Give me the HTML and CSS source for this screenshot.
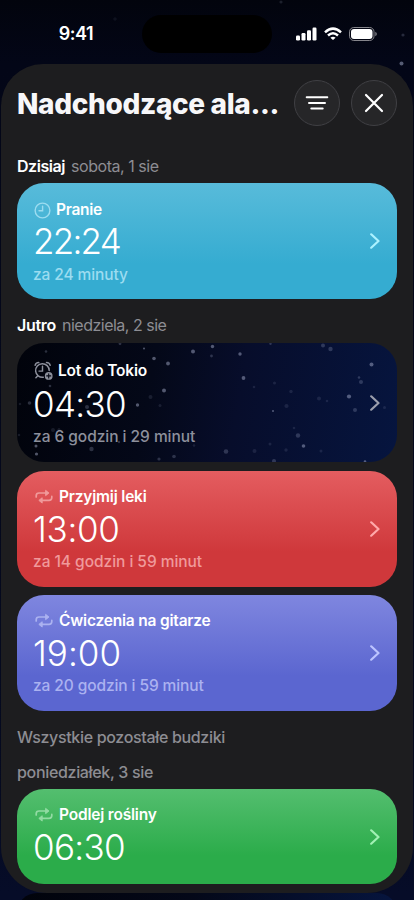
FILE: index.html
```html
<!DOCTYPE html>
<html lang="pl">
<head>
<meta charset="utf-8">
<meta name="viewport" content="width=device-width">
<title>Nadchodzące alarmy</title>
<link rel="stylesheet" href="styles.css">
</head>
<body>
<svg class="symbols" aria-hidden="true">
  <symbol id="repeat" viewBox="0 0 18 16">
    <path d="M1.200 8V6.800Q1.200 4 4 4h8M16.800 7.400v1.200q0 2.800-2.800 2.800H6" fill="none" stroke="currentColor" stroke-width="1.700" stroke-linecap="round"/>
    <path d="M10.600 1.300v5.400L14 4zM7.200 8.700v5.400L3.800 11.400z" fill="currentColor" stroke="currentColor" stroke-width=".9" stroke-linejoin="round"/>
  </symbol>
  <symbol id="chevron" viewBox="0 0 10 16">
    <path d="M1.200 1.300 8.500 8l-7.300 6.700" fill="none" stroke="currentColor" stroke-width="2.200" stroke-linecap="round" stroke-linejoin="round"/>
  </symbol>
</svg>
<div class="screen">
  <svg class="sky" viewBox="0 0 414 900" fill="#aab2d0">
    <circle cx="401.500" cy="63.500" r="2" opacity=".5"/><circle cx="403" cy="35" r="1.600" opacity=".22"/><circle cx="281" cy="2" r="1.600" opacity=".16"/><circle cx="115" cy="19" r="1.800" opacity=".08"/>
  </svg>
  <header class="status">
    <span class="clock">9:41</span>
    <div class="island"></div>
    <div class="indicators">
      <svg width="21" height="14" viewBox="0 0 21 14" fill="#fff"><rect x="0" y="8.500" width="4" height="5" rx="1.200"/><rect x="5.500" y="6" width="4" height="7.500" rx="1.200"/><rect x="11" y="3.300" width="4" height="10.200" rx="1.200"/><rect x="16.500" y=".5" width="4" height="13" rx="1.200"/></svg>
      <svg width="18" height="14" viewBox="0 0 18 14" fill="none" stroke="#fff" stroke-width="2.500"><path d="M1 5.300q8-7.300 16 0M4 8.500q5-4.500 10 0"/><path d="M9 13 6.400 10.700q2.600-2.100 5.200 0z" fill="#fff" stroke="none"/></svg>
      <svg width="28" height="14" viewBox="0 0 28 14"><rect x=".5" y=".5" width="24.500" height="13" rx="4.300" fill="none" stroke="#85858b"/><rect x="2" y="2" width="21.500" height="10" rx="3" fill="#fff"/><path d="M26.300 4.700q1.500.7 1.500 2.300t-1.500 2.300z" fill="#85858b"/></svg>
    </div>
  </header>
  <main class="sheet">
    <div class="toolbar">
      <h1>Nadchodzące ala...</h1>
      <button class="round" aria-label="Filtruj"><svg width="24" height="24" viewBox="0 0 24 24"><path d="M1.700 6.200h20.600M4 12h16M6.300 17.600h11.400" fill="none" stroke="#fff" stroke-width="2" stroke-linecap="round"/></svg></button>
      <button class="round" aria-label="Zamknij"><svg width="24" height="24" viewBox="0 0 24 24"><path d="m4 4 16 16M20 4 4 20" fill="none" stroke="#fff" stroke-width="2.200" stroke-linecap="round"/></svg></button>
    </div>

    <h2><b class="today">Dzisiaj</b> <span class="saturday">sobota, 1 sie</span></h2>
    <article class="card blue">
      <div class="info">
        <div class="name"><svg class="i-clock" viewBox="0 0 18 18" fill="none" stroke="currentColor" stroke-width="1.500" stroke-linecap="round"><circle cx="9" cy="9" r="7.800"/><path d="M9.100 4.500v4.800H5.300"/></svg><span>Pranie</span></div>
        <div class="time t1">22:24</div>
        <div class="left l1">za 24 minuty</div>
      </div>
      <svg class="chev"><use href="#chevron"/></svg>
    </article>

    <h2><b>Jutro</b> <span class="sunday">niedziela, 2 sie</span></h2>
    <article class="card night">
      <svg class="stars" viewBox="0 0 380 119" fill="#b6bddb">
        <g opacity=".44"><circle cx="176" cy="8.500" r="2"/><circle cx="137" cy="15.500" r="1.800"/><circle cx="151" cy="20.500" r="1.900"/><circle cx="147" cy="47.500" r="2"/><circle cx="120.500" cy="62" r="1.700"/><circle cx="195.500" cy="3.500" r="1.700"/><circle cx="223" cy="11" r="1.700"/><circle cx="226.500" cy="35" r="1.900"/><circle cx="337.500" cy="21.500" r="2" transform="translate(17)"/><circle cx="332" cy="53.500" r="2.100"/><circle cx="286.500" cy="103" r="1.800"/><circle cx="256" cy="68" r="1"/><circle cx="127" cy="5.500" r="1"/><circle cx="348" cy="118.500" r="1.300"/><circle cx="19.500" cy="111" r="1.600"/><circle cx="19" cy="103" r="1.500"/></g>
        <g opacity=".23"><circle cx="313.500" cy="6" r="2.200"/><circle cx="306" cy="2.500" r="2"/><circle cx="344" cy="39" r="2"/><circle cx="342" cy="34.500" r="1.300"/><circle cx="338" cy="67" r="2"/><circle cx="281" cy="92.500" r="2.200"/><circle cx="257" cy="118" r="2"/><circle cx="209" cy="108.500" r="2.300"/><circle cx="194.500" cy="13" r="1.400"/><circle cx="29" cy="8.500" r="1.300"/><circle cx="103" cy=".8" r="1.400"/><circle cx="33" cy="43" r="1.300"/><circle cx="12.500" cy="60" r="1.800"/><circle cx="74.500" cy="106" r="2.200"/><circle cx="142" cy="116" r="1.600"/><circle cx="157" cy="113.500" r="1.800"/><circle cx="102" cy="99" r="1.200"/><circle cx="70" cy="64" r="2"/><circle cx="253.500" cy=".7" r="1.200"/></g>
        <g opacity=".12"><circle cx="274" cy="48.500" r="1.700"/><circle cx="302" cy="55.500" r="2"/><circle cx="269.500" cy="63" r="2.100"/><circle cx="237" cy="44" r="1.300"/><circle cx="133.500" cy="54" r="2"/><circle cx="143" cy="62.500" r="1.500"/><circle cx="36" cy="87" r="2"/><circle cx="42" cy="86.500" r="1.500"/><circle cx="2" cy="92" r="1.300"/><circle cx="3" cy="61" r="1.300"/><circle cx="253" cy="101" r="1.500"/><circle cx="269" cy="107" r="1.700"/><circle cx="237.500" cy="108" r="2"/><circle cx="304" cy="108" r="1.500"/><circle cx="277" cy="85" r="1.300"/><circle cx="367.500" cy="64.500" r="1.500"/><circle cx="257.500" cy="40" r="1.500"/><circle cx="310" cy="58" r="1.300"/><circle cx="177" cy="102.500" r="1.300"/></g>
      </svg>
      <div class="info">
        <div class="name"><svg class="i-alarm" viewBox="0 0 19 20" fill="none" stroke="currentColor" stroke-width="1.450" stroke-linecap="round"><path d="M15.200 9.600A6.800 6.800 0 1 0 9.400 16.200M8.500 5.300v4.800H5M1.100 4.300Q1.600 1.600 4.800 1.500M12.500 1.500q3.100.1 3.700 2.800M3.600 15l-1.700 1.800"/><circle cx="14.700" cy="14.900" r="3.900" fill="currentColor" stroke="none"/><path d="M14.700 12.900v4M12.700 14.900h4" stroke="#050814" stroke-width="1.100"/></svg><span>Lot do Tokio</span></div>
        <div class="time t2">04:30</div>
        <div class="left">za 6 godzin i 29 minut</div>
      </div>
      <svg class="chev"><use href="#chevron"/></svg>
    </article>
    <article class="card red">
      <div class="info">
        <div class="name"><svg class="i-repeat"><use href="#repeat"/></svg><span>Przyjmij leki</span></div>
        <div class="time t3">13:00</div>
        <div class="left">za 14 godzin i 59 minut</div>
      </div>
      <svg class="chev"><use href="#chevron"/></svg>
    </article>
    <article class="card violet">
      <div class="info">
        <div class="name"><svg class="i-repeat"><use href="#repeat"/></svg><span>Ćwiczenia na gitarze</span></div>
        <div class="time t4">19:00</div>
        <div class="left l4">za 20 godzin i 59 minut</div>
      </div>
      <svg class="chev"><use href="#chevron"/></svg>
    </article>

    <h2 class="muted">Wszystkie pozostałe budziki</h2>
    <h2 class="muted date">poniedziałek, 3 sie</h2>
    <article class="card green">
      <div class="info">
        <div class="name"><svg class="i-repeat"><use href="#repeat"/></svg><span>Podlej rośliny</span></div>
        <div class="time t2">06:30</div>
      </div>
      <svg class="chev"><use href="#chevron"/></svg>
    </article>
  </main>
  <div class="next"></div>
</div>
</body>
</html>
```
FILE: styles.css
```css
* { box-sizing: border-box; }
body { margin: 0; background: #02040d; font-family: Inter, "Liberation Sans", sans-serif; color: #fff; }
h1, h2 { margin: 0; }
.symbols { position: absolute; width: 0; height: 0; }
.screen { position: relative; width: 414px; height: 900px; overflow: hidden; padding: 0 1px; display: flex; flex-direction: column;
  background: linear-gradient(#02040d 0, #030617 64px, #050a20 800px, #060c28 892px); }
.sky { position: absolute; inset: 0; width: 414px; height: 900px; filter: blur(.5px); }
.status { position: relative; height: 64px; flex: none; display: grid; grid-template-columns: 141px 130px 1fr; padding-top: 15px; }
.clock { justify-self: end; margin-right: 49px; font-size: 18px; font-weight: 600; line-height: 38px; letter-spacing: -.5px; white-space: nowrap; }
.island { height: 38px; border-radius: 19px; background: #000; }
.indicators { display: flex; align-items: center; height: 38px; padding-left: 24px; gap: 7px; }
.indicators svg { flex: none; }
.sheet { position: relative; flex: none; height: 829px; padding: 0 16px; border-radius: 42px 42px 46px 46px; background: #1d1d1f; display: flex; flex-direction: column; }
.toolbar { display: flex; align-items: center; height: 46px; margin-top: 16px; margin-bottom: 29px; flex: none; }
h1 { width: 277px; flex: none; font-size: 28px; line-height: 34px; font-weight: 800; letter-spacing: -.35px; padding-top: 1px; white-space: nowrap; color: #f7f7f9; }
.round { width: 46px; height: 46px; flex: none; padding: 0; border: 1px solid #404044; border-radius: 50%; background: #262628; display: grid; place-items: center; }
.round + .round { margin-left: 11px; }
h2 { display: flex; gap: 6px; height: 22px; flex: none; font-size: 16px; line-height: 22px; font-weight: 400; color: #8d8d93; white-space: nowrap; }
h2 b { font-weight: 600; color: #fff; letter-spacing: -.3px; }
.today { letter-spacing: -.45px; }
.saturday { letter-spacing: -.45px; }
.sunday { letter-spacing: -.5px; }
.muted { font-weight: 500; letter-spacing: -.33px; }
.date { margin-top: 13px; }
.card { position: relative; flex: none; height: 116px; margin: 6px 0 15px; padding: 16px 17px 0 16px; border-radius: 27px; overflow: hidden; display: flex; justify-content: space-between; }
.blue { background: linear-gradient(#58bbda, #35acd1 70%); --tint: #9cdcf0; }
.night { height: 119px; margin: 7px 0 9px; background: linear-gradient(100deg, #01030b 0, #040818 35%, #070d2b 58%, #06153f 100%); --tint: #8d909c; }
.red { margin: 0 0 8px; background: linear-gradient(#e45d60, #cf383b 70%); --tint: #f09a9b; }
.violet { margin: 0 0 15px; background: linear-gradient(#7f86df, #5b66d0 70%); --tint: #abb2f0; }
.green { height: 95px; margin: 6px 0 0; background: linear-gradient(#54be6f, #2bac4a 70%); --tint: #93dba4; }
.stars { position: absolute; inset: 0; width: 380px; height: 119px; filter: blur(.6px); }
.info { position: relative; white-space: nowrap; }
.name { display: flex; align-items: center; height: 20px; margin-bottom: 4px; font-size: 15.5px; font-weight: 600; line-height: 20px; letter-spacing: -.2px; }
.night .name { height: 23px; }
.blue .name { padding-top: 2px; letter-spacing: -.3px; }
.name svg { color: var(--tint); flex: none; }
.i-clock { width: 17px; height: 17px; margin: 0 5px 0 1px; }
.i-alarm { width: 19px; height: 20px; margin: 0 5px 0 1px; }
.i-repeat { width: 18px; height: 16px; margin: 0 6px 0 2px; }
.time { height: 36px; font-size: 35px; font-weight: 320; line-height: 36px; }
.t1 { letter-spacing: -1.75px; }
.t2 { letter-spacing: -.7px; }
.t3 { letter-spacing: -.3px; }
.t4 { letter-spacing: .05px; }
.left { margin-top: 5px; font-size: 15.5px; font-weight: 500; line-height: 20px; letter-spacing: -.04px; color: var(--tint); }
.l1 { letter-spacing: -.1px; padding-top: 1px; line-height: 19px; }
.l4 { letter-spacing: -.1px; }
.chev { position: relative; align-self: center; width: 10px; height: 16px; margin-top: -16px; color: var(--tint); filter: brightness(1.1); }
.next { position: relative; flex: none; height: 40px; margin: 0 16px; border-radius: 27px; background: linear-gradient(100deg, #01030b, #040818 45%, #06153f); }
```
